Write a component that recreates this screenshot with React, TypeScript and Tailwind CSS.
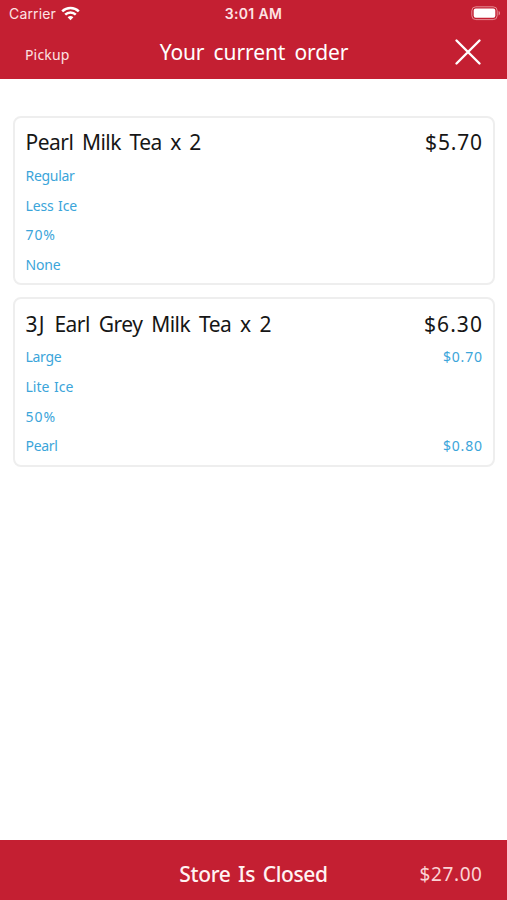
import React from 'react';

type Line = { name: string; track: string; price?: string };
type Item = { lead?: string; title: string; track: string; price: string; priceTrack: string; lines: Line[] };

const items: Item[] = [
  {
    title: 'Pearl Milk Tea x 2',
    track: 'tracking-[-0.5px] [word-spacing:3.5px]',
    price: '$5.70',
    priceTrack: 'tracking-[0.8px] -mr-[0.8px]',
    lines: [
      { name: 'Regular', track: 'tracking-[-0.3px]' },
      { name: 'Less Ice', track: 'tracking-[-0.15px] [word-spacing:1px]' },
      { name: '70%', track: 'tracking-[0.9px]' },
      { name: 'None', track: 'tracking-[-0.2px]' },
    ],
  },
  {
    lead: '3J',
    title: ' Earl Grey Milk Tea x 2',
    track: 'tracking-[-0.5px] [word-spacing:3.8px]',
    price: '$6.30',
    priceTrack: 'tracking-[1.1px] -mr-[1.1px]',
    lines: [
      { name: 'Large', track: 'tracking-[-0.3px]', price: '$0.70' },
      { name: 'Lite Ice', track: 'tracking-[0px] [word-spacing:1px]' },
      { name: '50%', track: 'tracking-[1px]' },
      { name: 'Pearl', track: 'tracking-[-0.3px]', price: '$0.80' },
    ],
  },
];

function StatusBar() {
  return (
    <div className="grid h-[27px] grid-cols-3 items-center px-[9px] font-['Inter',sans-serif] text-[14px] text-[#fde3e4]">
      <div className="flex items-center gap-[5px]">
        <span className="tracking-[0.15px]">Carrier</span>
        <svg className="-mt-px" width="19" height="15" viewBox="0 0 19 15" fill="none" stroke="#fff" strokeWidth="2.5">
          <path d="M1.2 5.4a11.8 11.8 0 0 1 16.6 0" />
          <path d="M4.2 8.7a7.5 7.5 0 0 1 10.6 0" />
          <path d="M9.5 14.3 6.6 11.3a4.2 4.2 0 0 1 5.8 0Z" fill="#fff" stroke="none" />
        </svg>
      </div>
      <span className="text-center text-[14px] font-semibold tracking-[0.3px] whitespace-nowrap">3:01 AM</span>
      <svg className="-mr-[3px] justify-self-end" width="30" height="15" viewBox="0 0 30 15">
        <rect x="0.8" y="0.8" width="25.4" height="12.8" rx="4" fill="none" stroke="#e58b93" strokeWidth="1" />
        <rect x="2.7" y="2.6" width="21.6" height="9.2" rx="2" fill="#fff" />
        <path d="M27.6 5v4.4c1.9-.7 1.9-3.7 0-4.4Z" fill="#e58b93" />
      </svg>
    </div>
  );
}

function OrderCard({ item }: { item: Item }) {
  return (
    <section className="h-[169.5px] rounded-[8px] border-2 border-[#eeeeee] bg-white pr-[10.5px] pl-[10.5px] pt-[8px]">
      <div className="flex h-[35px] items-center justify-between text-[21px] text-[#161616]">
        <h2 className={item.track}>
          {item.lead && <span className="tracking-[1.2px]">{item.lead}</span>}
          {item.title}
        </h2>
        <span className={item.priceTrack}>{item.price}</span>
      </div>
      {item.lines.map((line) => (
        <div key={line.name} className="flex h-[29.7px] items-center justify-between text-[14px] text-[#3ba5da]">
          <span className={line.track}>{line.name}</span>
          {line.price && <span className="-mr-[0.8px] tracking-[0.8px]">{line.price}</span>}
        </div>
      ))}
    </section>
  );
}

export default function App() {
  return (
    <div className="flex h-[900px] w-[507px] flex-col bg-white font-['Noto_Sans',sans-serif]">
      <header className="h-[79px] bg-[#c41f32] text-white">
        <StatusBar />
        <div className="grid h-[50px] grid-cols-[1fr_auto_1fr] items-center px-[25px]">
          <span className="pt-[5px] text-[14px] tracking-[0.15px] text-[#fde3e4]">Pickup</span>
          <h1 className="pt-[2px] pl-px text-[21px] tracking-[-0.1px] [word-spacing:3.8px]">Your current order</h1>
          <svg className="justify-self-end" width="28" height="28" viewBox="0 0 28 28" stroke="#fff" strokeWidth="2.4" strokeLinecap="round">
            <path d="M2.5 2.5 25.5 25.5M25.5 2.5 2.5 25.5" />
          </svg>
        </div>
      </header>
      <main className="flex flex-1 flex-col gap-[12px] pr-[12.5px] pl-[13px] pt-[36.5px]">
        {items.map((item) => (
          <OrderCard key={item.title} item={item} />
        ))}
      </main>
      <footer className="grid h-[60px] grid-cols-[1fr_auto_1fr] items-center bg-[#c41f32] px-[25px] pt-[9px]">
        <span />
        <span className="text-[21px] font-medium tracking-[-0.35px] text-[#fff3f3] [word-spacing:2.5px]">Store Is Closed</span>
        <span className="-mr-[0.6px] justify-self-end text-[19px] tracking-[0.6px] text-[#fbd3d5]">$27.00</span>
      </footer>
    </div>
  );
}
